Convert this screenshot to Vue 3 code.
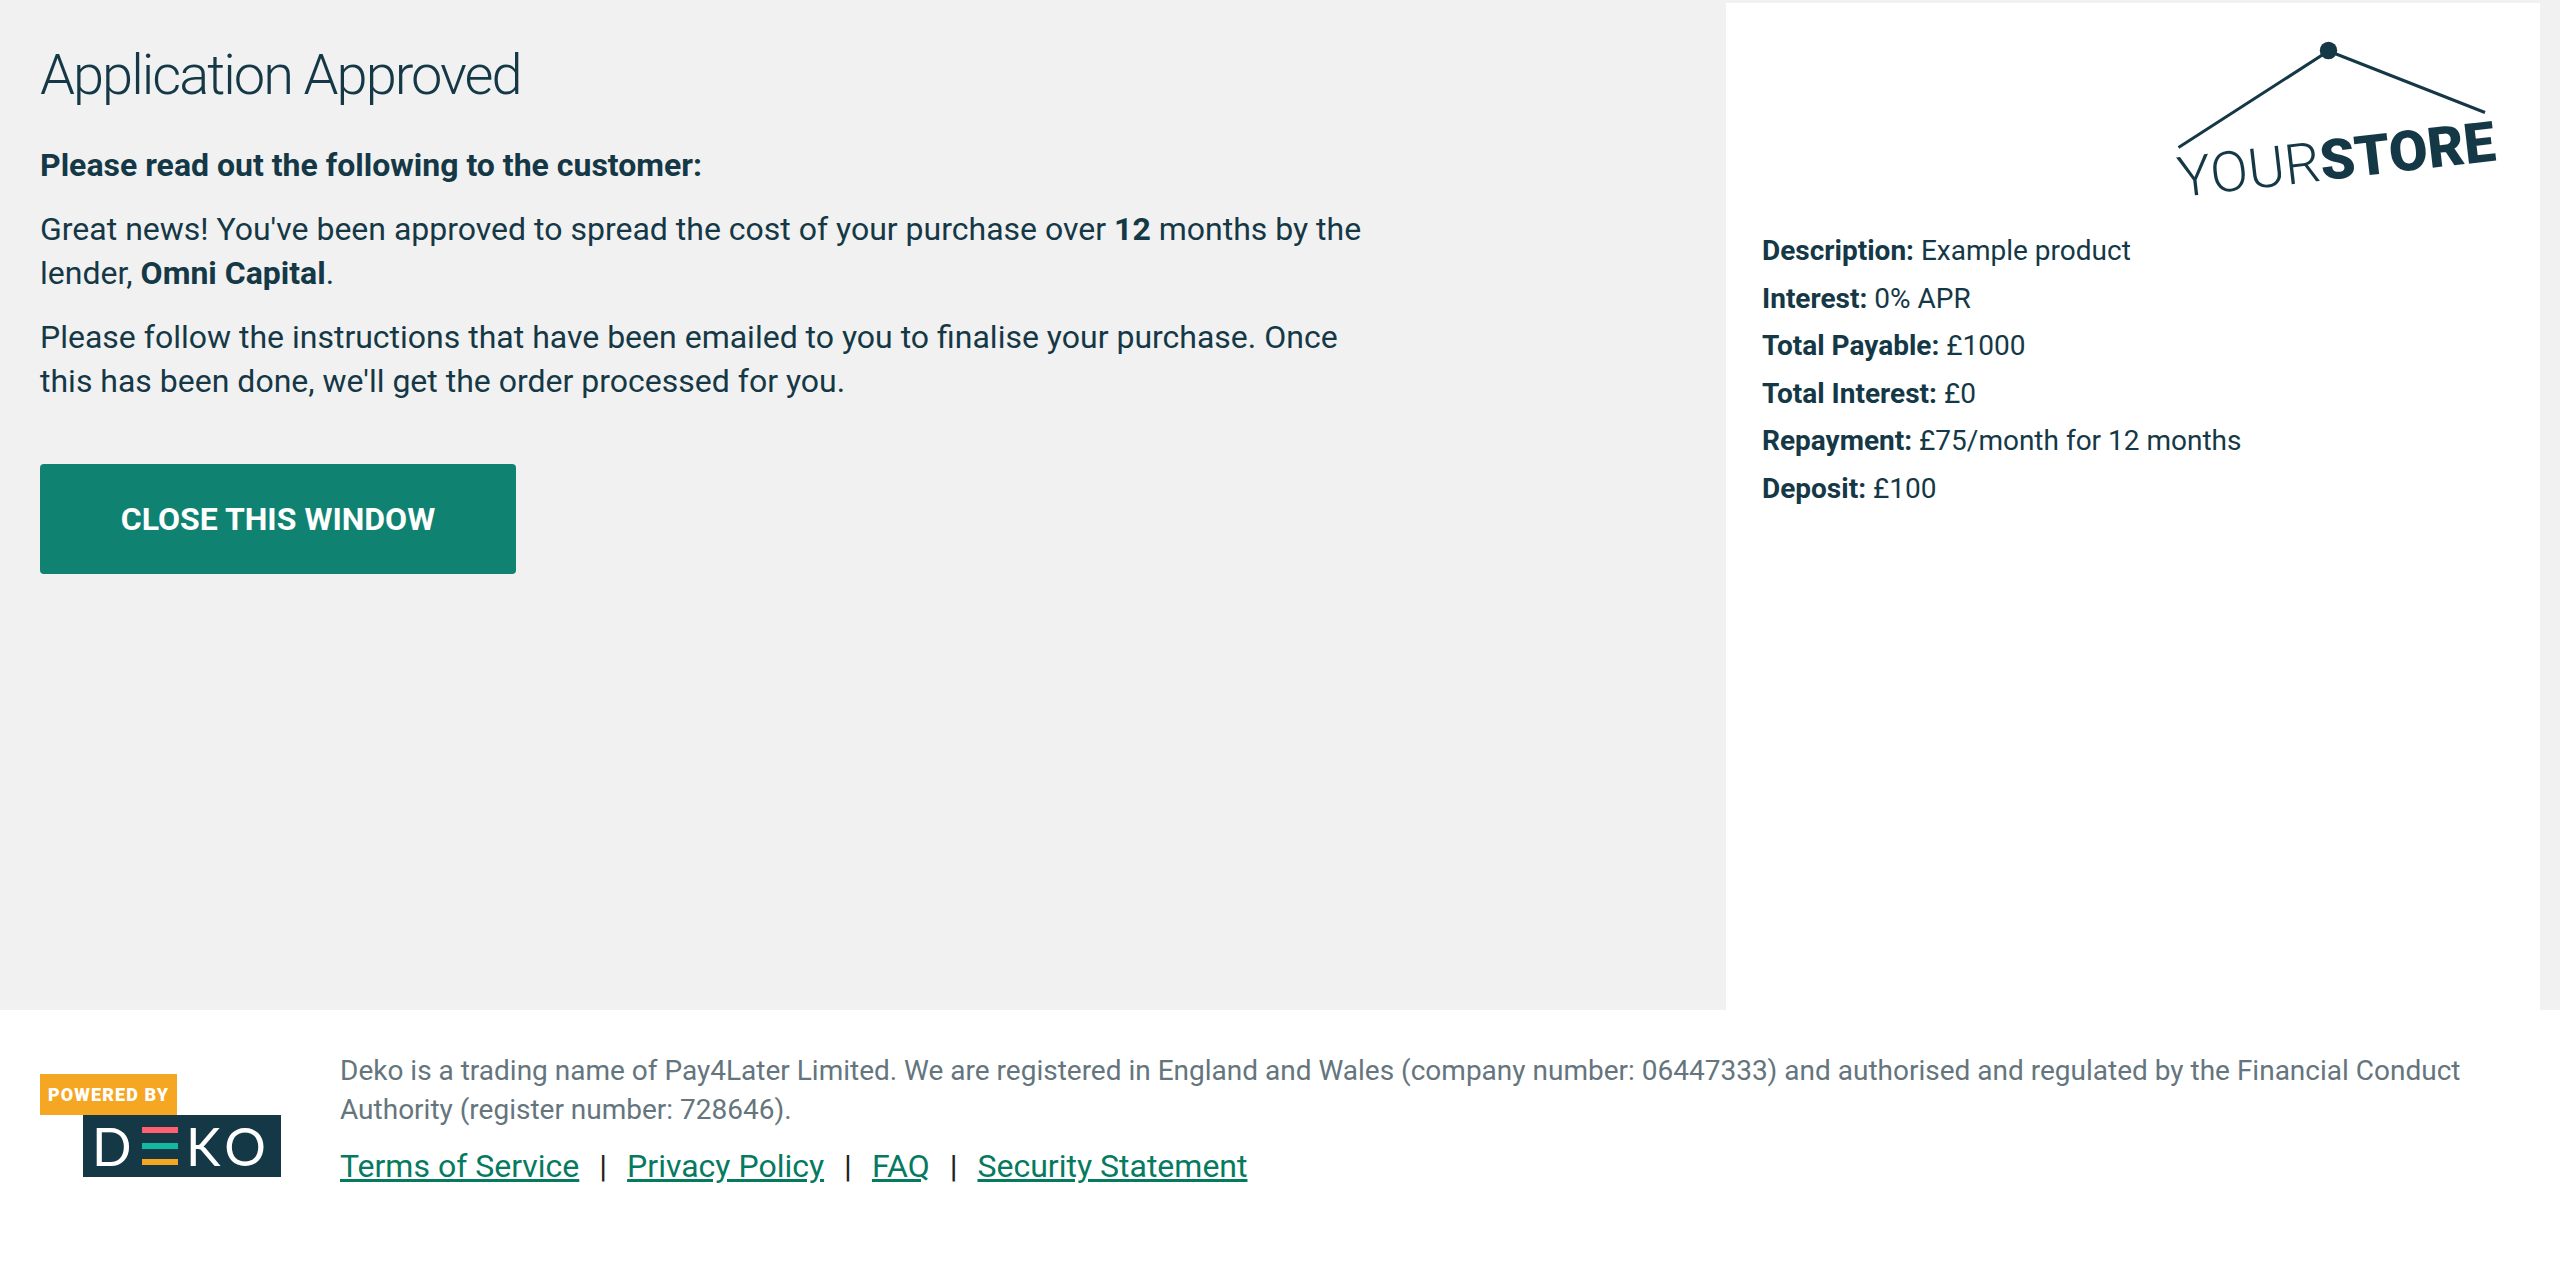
<script setup>
const details = [
  ['Description:', 'Example product'],
  ['Interest:', '0% APR'],
  ['Total Payable:', '£1000'],
  ['Total Interest:', '£0'],
  ['Repayment:', '£75/month for 12 months'],
  ['Deposit:', '£100'],
]
const links = ['Terms of Service', 'Privacy Policy', 'FAQ', 'Security Statement']
</script>

<template>
  <div class="page">
    <div class="top">
      <main class="main">
        <h1>Application Approved</h1>
        <p class="lead">Please read out the following to the customer:</p>
        <p>Great news! You've been approved to spread the cost of your purchase over <b>12</b> months by the lender, <b>Omni Capital</b>.</p>
        <p>Please follow the instructions that have been emailed to you to finalise your purchase. Once this has been done, we'll get the order processed for you.</p>
        <button class="close">CLOSE THIS WINDOW</button>
      </main>
      <aside class="side">
        <svg class="store" viewBox="0 0 400 190" width="400" height="190" aria-label="Your Store">
          <path d="M38.5 127.5 L188.5 31 L345 92.5" fill="none" stroke="#153846" stroke-width="3" />
          <circle cx="188.5" cy="30.5" r="8.7" fill="#153846" />
          <text transform="translate(40 177) rotate(-6.6)" class="logo-text"><tspan class="your">YOUR</tspan><tspan class="st">STORE</tspan></text>
        </svg>
        <div class="details">
          <div v-for="d in details" :key="d[0]" class="row"><b>{{ d[0] }}</b> {{ d[1] }}</div>
        </div>
      </aside>
    </div>
    <footer class="foot">
      <div class="deko">
        <div class="powered">POWERED BY</div>
        <div class="brand">
          <span class="bl d">D</span>
          <span class="bars"><i class="b1"></i><i class="b2"></i><i class="b3"></i></span>
          <span class="bl ko">KO</span>
        </div>
      </div>
      <div class="legal">
        <p class="small">Deko is a trading name of Pay4Later Limited. We are registered in England and Wales (company number: 06447333) and authorised and regulated by the Financial Conduct Authority (register number: 728646).</p>
        <nav class="links">
          <template v-for="(l, i) in links" :key="l">
            <span v-if="i" class="sep">|</span>
            <a href="#">{{ l }}</a>
          </template>
        </nav>
      </div>
    </footer>
  </div>
</template>

<style scoped>
.page {
  width: 2560px;
  height: 1266px;
  font-family: Roboto, "Liberation Sans", sans-serif;
  color: #153846;
  background: #fff;
  overflow: hidden;
}
.top {
  height: 1010px;
  background: #f1f1f1;
  display: flex;
  padding-right: 20px;
  box-sizing: border-box;
}
.main {
  width: 1726px;
  box-sizing: border-box;
  padding: 40px 40px 0;
  flex: none;
}
h1 {
  margin: 0 0 33px;
  font-size: 56px;
  line-height: 70px;
  font-weight: 300;
  letter-spacing: -2px;
}
.main p {
  margin: 0 0 20px;
  width: 1340px;
  font-size: 32px;
  line-height: 44px;
}
.main .lead { font-weight: 700; }
.close {
  display: block;
  margin-top: 61px;
  width: 476px;
  height: 110px;
  border: 0;
  border-radius: 4px;
  background: #0f8272;
  color: #fff;
  font: 700 32px Roboto, sans-serif;
}
.side {
  flex: 1;
  margin-top: 3px;
  background: #fff;
  display: flex;
  flex-direction: column;
}
.store {
  display: block;
  align-self: flex-end;
  margin-top: 17px;
  flex: none;
}
.logo-text { font-family: Roboto, sans-serif; font-size: 56px; fill: #153846; }
.your { font-weight: 300; }
.st { font-weight: 900; }
.details {
  padding: 17px 0 0 36px;
  font-size: 28px;
  line-height: 47.6px;
}
.foot {
  display: flex;
  padding: 0 40px;
  height: 256px;
  box-sizing: border-box;
}
.deko {
  width: 300px;
  flex: none;
  margin-top: 64px;
}
.powered {
  width: 137px;
  height: 41px;
  background: #f5a623;
  color: #fff;
  font: 900 18px/41px Roboto, sans-serif;
  letter-spacing: 1.1px;
  padding-left: 8px;
  box-sizing: border-box;
  white-space: nowrap;
}
.brand {
  margin-left: 43px;
  width: 198px;
  height: 62px;
  background: #153846;
  color: #fff;
  display: flex;
  align-items: center;
  padding-left: 9px;
  box-sizing: border-box;
}
.bl {
  font: 400 52px/62px Lato, sans-serif;
}
.d { width: 50px; }
.ko { letter-spacing: 6px; white-space: nowrap; }
.bars {
  display: flex;
  flex-direction: column;
  justify-content: space-between;
  width: 36px;
  height: 38px;
  margin-right: 8px;
  flex: none;
}
.bars i { display: block; height: 6px; }
.b1 { background: #ff5f6e; }
.b2 { background: #13b8a0; }
.b3 { background: #f5a623; }
.legal {
  padding-top: 41px;
}
.small {
  margin: 0;
  font-size: 28px;
  line-height: 39px;
  color: #65757d;
}
.links {
  margin-top: 15px;
  font-size: 32px;
  line-height: 44px;
  display: flex;
}
.links a { color: #067a61; text-decoration: underline; }
.sep { margin: 0 20px; color: #222; }
</style>

<style>
html, body { margin: 0; background: #fff; }
</style>
